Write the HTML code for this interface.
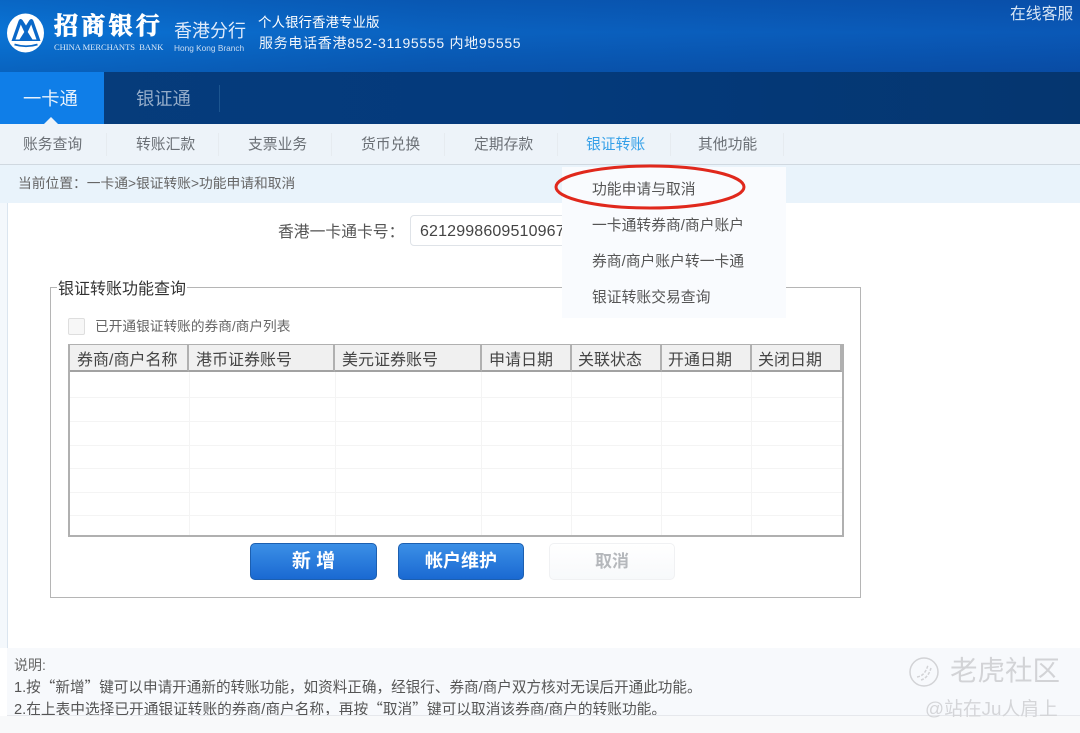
<!DOCTYPE html>
<html lang="zh-CN"><head><meta charset="utf-8"><title>招商银行</title>
<style>
*{margin:0;padding:0;box-sizing:border-box}
html,body{width:1080px;height:733px;overflow:hidden;background:#fff}
body{position:relative;font-family:"Liberation Sans","Noto Sans CJK SC",sans-serif;color:#555}
.a,.t{position:absolute}
.t{white-space:nowrap;line-height:20px}
.q{font-family:"Noto Sans CJK SC",sans-serif}
.nav{font-size:14.800px;color:#6a6f75;top:135px}
.sep{position:absolute;top:133px;width:1px;height:23px;background:#e6ebf0}
.menu{font-size:14.800px;color:#555;left:592px}
.th{top:351px;font-size:16px;color:#444}
.hc{position:absolute;top:345px;height:27px;background:#f0f0f0;border-right:2px solid #b0b0b0;border-bottom:2px solid #a2a2a2}
.v{position:absolute;top:372px;width:1px;height:163px;background:#f4f4f4}
.h{position:absolute;left:70px;width:772px;height:1px;background:#f4f4f4}
.btn{position:absolute;top:543px;height:37px;width:127px;border-radius:5px;background:linear-gradient(#3b8fe6,#1a69d2);border:1px solid #1c5fb0;color:#fff;font-size:18px;font-weight:bold;text-align:center;line-height:35px}
</style></head><body>

<div class="a" style="left:0;top:0;width:1080px;height:72px;background:linear-gradient(90deg,#0a74d6 0%,#0a62c0 40%,#0a58b6 100%)"></div>
<div class="a" style="left:0;top:0;width:1080px;height:72px;background:linear-gradient(rgba(0,20,90,.14),rgba(0,30,90,0) 45%,rgba(0,10,70,.16))"></div>

<svg class="a" style="left:7px;top:13px" width="38" height="40" viewBox="0 0 38 40">
<ellipse cx="18.500" cy="20" rx="18.500" ry="19.500" fill="#fff"/>
<path d="M4.500 28 L11.500 8 Q13 4.500 15.500 7 L19 12.500 L22.500 7 Q25 4.500 26.500 8 L33.500 28 Z" fill="#0a68c8"/>
<path d="M8.500 26.500 L13.800 11.500 L17.300 19 L12.500 26.500 Z M29.500 26.500 L24.200 11.500 L20.700 19 L25.500 26.500 Z" fill="#fff"/>
<path d="M7.500 31.500 Q19 35 30.500 31.500" fill="none" stroke="#0a68c8" stroke-width="1.800"/>
</svg>

<div class="t" style="left:54px;top:12px;font-size:24px;line-height:30px;font-weight:bold;color:#fff;letter-spacing:3.300px;font-family:'Liberation Serif','Noto Serif CJK SC',serif;-webkit-text-stroke:.9px #fff">招商银行</div>
<div class="t" style="left:54px;top:41px;font-size:8.500px;line-height:12px;color:#dbe9f8;font-family:'Liberation Serif',serif">CHINA MERCHANTS&nbsp; BANK</div>
<div class="t" style="left:174px;top:20px;font-size:18px;line-height:22px;color:#dfeafa">香港分行</div>
<div class="t" style="left:174px;top:42px;font-size:8.300px;line-height:12px;color:#c9dcf2">Hong Kong Branch</div>
<div class="t" style="left:258px;top:13px;font-size:13.500px;color:#fff">个人银行香港专业版</div>
<div class="t" style="left:259px;top:33px;font-size:14px;color:#f0f5fb;letter-spacing:.7px">服务电话香港852-31195555 内地95555</div>
<div class="t" style="left:1010px;top:5px;font-size:15.800px;color:#d5e4f5">在线客服</div>

<div class="a" style="left:0;top:72px;width:1080px;height:52px;background:linear-gradient(90deg,#063c7b,#043a7c 50%,#05366f)"></div>
<div class="a" style="left:0;top:72px;width:104px;height:52px;background:#0f7ee8"></div>
<div class="a" style="left:219px;top:85px;width:1px;height:27px;background:#1c5590"></div>
<div class="t" style="left:23px;top:87px;font-size:18.300px;line-height:24px;color:#e8f2fc">一卡通</div>
<div class="t" style="left:136px;top:87px;font-size:18.300px;line-height:24px;color:#93abc8">银证通</div>
<div class="a" style="left:44px;top:117px;width:0;height:0;border-left:7px solid transparent;border-right:7px solid transparent;border-bottom:7px solid #edf3f9"></div>

<div class="a" style="left:0;top:124px;width:1080px;height:41px;background:#edf3f9;border-bottom:1px solid #d0d8e0"></div>
<div class="t nav" style="left:23px">账务查询</div>
<div class="t nav" style="left:136px">转账汇款</div>
<div class="t nav" style="left:248px">支票业务</div>
<div class="t nav" style="left:361px">货币兑换</div>
<div class="t nav" style="left:474px">定期存款</div>
<div class="t nav" style="left:586px;color:#35a0e8">银证转账</div>
<div class="t nav" style="left:698px">其他功能</div>
<div class="sep" style="left:106px"></div><div class="sep" style="left:218px"></div><div class="sep" style="left:331px"></div><div class="sep" style="left:444px"></div><div class="sep" style="left:557px"></div><div class="sep" style="left:670px"></div><div class="sep" style="left:783px"></div>

<div class="a" style="left:0;top:165px;width:1080px;height:38px;background:#e9f3fb"></div>
<div class="t" style="left:18px;top:174px;font-size:13.750px;color:#666">当前位置：一卡通&gt;银证转账&gt;功能申请和取消</div>
<div class="a" style="left:7px;top:203px;width:1px;height:445px;background:#dbe5ef"></div>
<div class="a" style="left:0;top:203px;width:7px;height:445px;background:#f4f8fc"></div>

<div class="t" style="left:278px;top:223px;font-size:15.800px;color:#555">香港一卡通卡号：</div>
<div class="a" style="left:410px;top:215px;width:170px;height:31px;border:1px solid #dfe3e8;border-radius:4px;background:#fff"></div>
<div class="t" style="left:420px;top:222px;font-size:16px;color:#444;letter-spacing:.15px">6212998609510967</div>

<div class="a" style="left:50px;top:287px;width:811px;height:311px;border:1px solid #b5b5b5"></div>
<div class="t" style="left:57px;top:280px;font-size:16px;color:#333;background:#fff;padding:0 1px">银证转账功能查询</div>
<div class="a" style="left:68px;top:318px;width:17px;height:17px;border:1px solid #dedede;border-radius:2px;background:#f7f7f7"></div>
<div class="t" style="left:95px;top:317px;font-size:13.700px;color:#666">已开通银证转账的券商/商户列表</div>

<div class="a" style="left:68px;top:344px;width:776px;height:193px;border:2px solid #b0b0b0;border-top-width:1px;background:#fff"></div>
<div class="hc" style="left:70px;width:119px"></div>
<div class="hc" style="left:189px;width:146px"></div>
<div class="hc" style="left:335px;width:147px"></div>
<div class="hc" style="left:482px;width:90px"></div>
<div class="hc" style="left:572px;width:90px"></div>
<div class="hc" style="left:662px;width:90px"></div>
<div class="hc" style="left:752px;width:90px"></div>
<div class="t th" style="left:77px">券商/商户名称</div>
<div class="t th" style="left:196px">港币证券账号</div>
<div class="t th" style="left:342px">美元证券账号</div>
<div class="t th" style="left:489px">申请日期</div>
<div class="t th" style="left:578px">关联状态</div>
<div class="t th" style="left:668px">开通日期</div>
<div class="t th" style="left:758px">关闭日期</div>
<div class="v" style="left:189px"></div><div class="v" style="left:335px"></div><div class="v" style="left:481px"></div><div class="v" style="left:571px"></div><div class="v" style="left:661px"></div><div class="v" style="left:751px"></div>
<div class="h" style="top:397px"></div><div class="h" style="top:421px"></div><div class="h" style="top:445px"></div><div class="h" style="top:468px"></div><div class="h" style="top:492px"></div><div class="h" style="top:515px"></div>

<div class="btn" style="left:250px;font-size:19px">新 增</div>
<div class="btn" style="left:398px;width:126px">帐户维护</div>
<div class="a" style="left:549px;top:543px;width:126px;height:37px;border:1px solid #f0f1f3;border-radius:5px;background:linear-gradient(#fff,#f7f9fb);color:#b5b8bc;font-size:17px;font-weight:bold;text-align:center;line-height:35px">取消</div>

<div class="a" style="left:7px;top:648px;width:1073px;height:67px;background:#f7f9fc"></div>
<div class="t" style="left:14px;top:655px;font-size:14px;color:#666">说明:</div>
<div class="t" style="left:14px;top:677px;font-size:14.600px;color:#555">1.按<span class="q">“</span>新增<span class="q">”</span>键可以申请开通新的转账功能，如资料正确，经银行、券商/商户双方核对无误后开通此功能。</div>
<div class="t" style="left:14px;top:699px;font-size:14.700px;color:#555">2.在上表中选择已开通银证转账的券商/商户名称，再按<span class="q">“</span>取消<span class="q">”</span>键可以取消该券商/商户的转账功能。</div>
<div class="a" style="left:7px;top:715px;width:1073px;height:1px;background:#e6e8ec"></div>
<div class="a" style="left:0;top:716px;width:1080px;height:17px;background:#f8f9fa"></div>

<div class="a" style="left:562px;top:167px;width:224px;height:151px;background:#f9fbfe"></div>
<div class="t menu" style="top:180px">功能申请与取消</div>
<div class="t menu" style="top:216px">一卡通转券商/商户账户</div>
<div class="t menu" style="top:252px">券商/商户账户转一卡通</div>
<div class="t menu" style="top:288px">银证转账交易查询</div>
<svg class="a" style="left:550px;top:160px" width="204" height="54" viewBox="0 0 204 54"><ellipse cx="100" cy="27" rx="94" ry="21" fill="none" stroke="#e0281c" stroke-width="3"/></svg>

<svg class="a" style="left:908px;top:656px" width="32" height="32" viewBox="0 0 32 32" fill="none" stroke="#d2d3d6" stroke-width="1.500"><circle cx="16" cy="16" r="14"/><path d="M9 21 Q17 20 20 9 M13 24 Q20 22 23 12" stroke-dasharray="3 1.500"/></svg>
<div class="t" style="left:950px;top:655px;font-size:27.500px;line-height:32px;color:#d2d3d6">老虎社区</div>
<div class="t" style="left:925px;top:697px;font-size:18.800px;line-height:24px;color:#d4d5d8">@站在Ju人肩上</div>
</body></html>
